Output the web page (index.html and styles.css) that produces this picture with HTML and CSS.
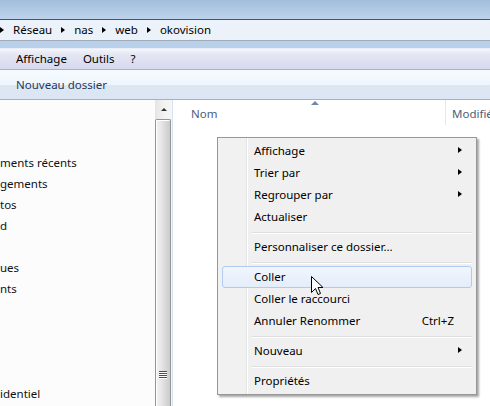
FILE: index.html
```html
<!DOCTYPE html>
<html lang="fr">
<head>
<meta charset="utf-8">
<title>okovision</title>
<link rel="stylesheet" href="styles.css">
</head>
<body>
<div class="window">
  <div class="titlebar"></div>
  <div class="addressbar">
    <span class="crumb-arrow"></span><span class="crumb">Réseau</span>
    <span class="crumb-arrow"></span><span class="crumb">nas</span>
    <span class="crumb-arrow"></span><span class="crumb">web</span>
    <span class="crumb-arrow"></span><span class="crumb">okovision</span>
  </div>
  <div class="blueband"></div>
  <div class="menubar">
    <span class="menubar-item">Affichage</span>
    <span class="menubar-item">Outils</span>
    <span class="menubar-item">?</span>
  </div>
  <div class="toolbar">
    <span class="toolbar-item">Nouveau dossier</span>
  </div>
  <div class="content">
    <div class="navpane">
      <div class="nav-row">ments récents</div>
      <div class="nav-row">gements</div>
      <div class="nav-row">tos</div>
      <div class="nav-row">d</div>
      <div class="nav-row"></div>
      <div class="nav-row">ues</div>
      <div class="nav-row">nts</div>
      <div class="nav-row"></div>
      <div class="nav-row"></div>
      <div class="nav-row"></div>
      <div class="nav-row"></div>
      <div class="nav-row">identiel</div>
    </div>
    <div class="scrollbar">
      <div class="sb-up"><span class="sb-up-arrow"></span></div>
      <div class="sb-thumb"><div class="grip"><i></i><i></i><i></i><i></i></div></div>
    </div>
    <div class="splitter"></div>
    <div class="files">
      <div class="header">
        <div class="col col-name">Nom<span class="sort"></span></div>
        <div class="col col-date"><span class="col-clip">Modifié le</span></div>
      </div>
    </div>
  </div>

  <div class="menu">
    <div class="item">Affichage<span class="sub"></span></div>
    <div class="item">Trier par<span class="sub"></span></div>
    <div class="item">Regrouper par<span class="sub"></span></div>
    <div class="item">Actualiser</div>
    <div class="sep"></div>
    <div class="item">Personnaliser ce dossier...</div>
    <div class="sep"></div>
    <div class="item hot">Coller</div>
    <div class="item">Coller le raccourci</div>
    <div class="item">Annuler Renommer<span class="key">Ctrl+Z</span></div>
    <div class="sep"></div>
    <div class="item">Nouveau<span class="sub"></span></div>
    <div class="sep"></div>
    <div class="item">Propriétés</div>
  </div>

  <svg class="cursor" width="13" height="20" viewBox="0 0 13 20">
    <path d="M0.5 0.5 L0.5 16.5 L4.5 12.5 L7 18.5 L9.5 17.5 L7 11.5 L12 11.5 Z" fill="#fff" stroke="#000" stroke-width="1" stroke-linejoin="miter"/>
  </svg>
</div>
</body>
</html>
```

FILE: styles.css
```css
* { box-sizing: border-box; }

html, body {
  margin: 0;
  padding: 0;
}

body {
  width: 490px;
  height: 406px;
  overflow: hidden;
  font-family: "Noto Sans", "Open Sans", sans-serif;
  font-size: 11.5px;
  color: #000;
  background: #fff;
}

.window {
  position: relative;
  width: 490px;
  height: 406px;
  display: flex;
  flex-direction: column;
  overflow: hidden;
}

.titlebar {
  height: 19px;
  flex: none;
  background: linear-gradient(#a3bedb, #bdd3eb);
}

.addressbar {
  height: 22px;
  flex: none;
  border-top: 1px solid #50545a;
  border-bottom: 1px solid #a2abb8;
  background: #ecf2f9;
  display: flex;
  align-items: center;
  gap: 9px;
  line-height: 20px;
}

.crumb-arrow {
  width: 0;
  height: 0;
  border-left: 4px solid #000;
  border-top: 3.5px solid transparent;
  border-bottom: 3.5px solid transparent;
  flex: none;
}

.blueband {
  height: 8px;
  flex: none;
  background: linear-gradient(#b8d0ea 0 7px, #e8eef8 7px);
}

.menubar {
  height: 21px;
  flex: none;
  border-bottom: 1px solid #abb1c3;
  background: linear-gradient(#f5f6fb, #e3e5f2 30%, #d6daee);
  display: flex;
  align-items: center;
  padding-left: 8px;
}

.menubar-item {
  padding: 0 8px;
  line-height: 20px;
}

.toolbar {
  height: 30px;
  flex: none;
  border-bottom: 1px solid #a0b3ca;
  background: linear-gradient(#f7fbff 0, #eef5fc 50%, #dde7f4 52%, #dbe5f3 100%);
  display: flex;
  align-items: center;
  padding-left: 16px;
  color: #1e395b;
}

.content {
  flex: 1;
  display: flex;
  min-height: 0;
}

.navpane {
  width: 155px;
  flex: none;
  background: #fcfcfc;
  padding-top: 52px;
  overflow: hidden;
  white-space: nowrap;
}

.nav-row {
  height: 21px;
  line-height: 21px;
  color: #111;
}

.scrollbar {
  width: 17px;
  flex: none;
  display: flex;
  flex-direction: column;
  background: linear-gradient(to right, #e4e4e4, #f2f2f2 50%, #f6f6f6);
}

.sb-up {
  height: 18px;
  flex: none;
  display: flex;
  align-items: center;
  justify-content: center;
  padding-left: 1px;
}

.sb-up-arrow {
  width: 0;
  height: 0;
  border-bottom: 3px solid #333;
  border-left: 3.5px solid transparent;
  border-right: 3.5px solid transparent;
}

.sb-thumb {
  flex: 1;
  margin: 1px 1px 0 0;
  border: 1px solid #959595;
  border-bottom: none;
  border-radius: 2px 2px 0 0;
  background: linear-gradient(to right, #f3f3f3, #e6e6e6 40%, #d5d5d5 75%, #cbcbcb);
  box-shadow: inset 1px 1px 0 #fff;
  display: flex;
  flex-direction: column;
  justify-content: flex-end;
  align-items: center;
  padding-bottom: 28px;
}

.grip {
  display: flex;
  flex-direction: column;
  gap: 1px;
}

.grip i {
  display: block;
  width: 8px;
  height: 1px;
  background: #4c4c4c;
  box-shadow: 0 1px 0 #fff;
}

.splitter {
  width: 1px;
  flex: none;
  background: #d5e3f4;
}

.files {
  flex: 1;
  background: #fff;
  min-width: 0;
}

.header {
  height: 25px;
  display: flex;
  white-space: nowrap;
  overflow: hidden;
}

.col {
  position: relative;
  color: #4c607a;
  line-height: 28px;
  padding-left: 18px;
}

.col-name {
  width: 273px;
  flex: none;
  border-right: 1px solid #e3e9f1;
}

.col-date {
  flex: 1;
  min-width: 0;
  padding-left: 6px;
  overflow: hidden;
}

.col-clip {
  display: block;
  width: 38px;
  overflow: hidden;
}

.sort {
  position: absolute;
  left: 138px;
  top: 1px;
  width: 0;
  height: 0;
  border-bottom: 4px solid #6f8aa8;
  border-left: 4px solid transparent;
  border-right: 4px solid transparent;
}

.menu {
  position: absolute;
  left: 217px;
  top: 137px;
  width: 260px;
  border: 1px solid #979797;
  padding: 2px;
  background: linear-gradient(to right, #f1f1f1 0 28px, #e2e3e3 28px 29px, #ffffff 29px 30px, #f0f0f0 30px);
  box-shadow: 2px 2px 2px rgba(0, 0, 0, 0.35);
}

.item {
  position: relative;
  height: 22px;
  line-height: 20px;
  margin: 0 2px;
  padding-left: 31px;
  border: 1px solid transparent;
  border-radius: 3px;
  white-space: nowrap;
}

.item.hot {
  border-color: #aeccf1;
  background: linear-gradient(#f1f6fd, #e4edfa);
}

.sub {
  position: absolute;
  right: 9px;
  top: 6px;
  width: 0;
  height: 0;
  border-left: 4px solid #000;
  border-top: 3.5px solid transparent;
  border-bottom: 3.5px solid transparent;
}

.key {
  position: absolute;
  right: 17px;
  top: 0;
}

.sep {
  height: 8px;
  margin-left: 31px;
  margin-right: 2px;
  padding-top: 4px;
}

.sep::before {
  content: "";
  display: block;
  height: 1px;
  background: #e0e0e0;
  box-shadow: 0 1px 0 #fff;
}

.cursor {
  position: absolute;
  left: 311px;
  top: 276px;
}
```
